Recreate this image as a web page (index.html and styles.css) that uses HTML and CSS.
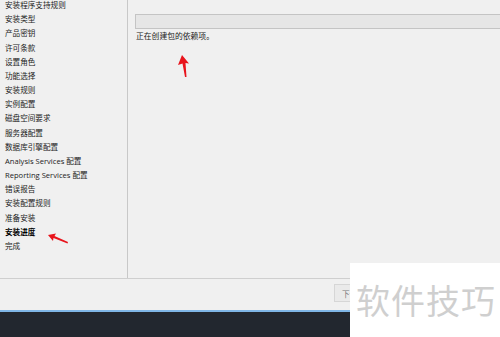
FILE: index.html
```html
<!DOCTYPE html>
<html lang="zh-CN">
<head>
<meta charset="utf-8">
<link rel="stylesheet" href="styles.css">
</head>
<body>
<div class="window">
  <div class="main">
    <nav class="steps">
      <ul class="step-list">
        <li>安装程序支持规则</li>
        <li>安装类型</li>
        <li>产品密钥</li>
        <li>许可条款</li>
        <li>设置角色</li>
        <li>功能选择</li>
        <li>安装规则</li>
        <li>实例配置</li>
        <li>磁盘空间要求</li>
        <li>服务器配置</li>
        <li>数据库引擎配置</li>
        <li>Analysis Services 配置</li>
        <li>Reporting Services 配置</li>
        <li>错误报告</li>
        <li>安装配置规则</li>
        <li>准备安装</li>
        <li class="current">安装进度</li>
        <li>完成</li>
      </ul>
    </nav>
    <section class="content">
      <div class="progress"></div>
      <p class="status">正在创建包的依赖项。</p>
    </section>
  </div>
  <div class="footer">
    <button class="btn">下一</button>
  </div>
  <div class="taskbar"></div>

  <svg class="arrow arrow-up" width="20" height="26" viewBox="0 0 20 26">
    <path d="M6 2 L2 12 L6.5 10.5 L9 24 L10.5 24 L9.5 10 L13 10.5 Z" fill="#e8141c"/>
  </svg>
  <svg class="arrow arrow-left" width="24" height="14" viewBox="0 0 24 14">
    <path d="M1 3 L9 1.5 L7.5 4 L21 10 L20.5 11.5 L6.5 6 L6 9 Z" fill="#e8141c"/>
  </svg>

  <div class="watermark">软件技巧</div>
</div>
</body>
</html>
```
FILE: styles.css
```css
* { box-sizing: border-box; }
html, body { margin: 0; padding: 0; }
body {
  width: 500px;
  height: 337px;
  overflow: hidden;
  background: #f0f0f0;
  font-family: "Open Sans", "Noto Sans CJK SC", sans-serif;
  color: #1e1e1e;
}
.window {
  position: relative;
  width: 500px;
  height: 337px;
  display: flex;
  flex-direction: column;
}
.main {
  display: flex;
  height: 279px;
  border-bottom: 1px solid #cfcfcf;
}
.steps {
  width: 128px;
  border-right: 1px solid #c8c8c8;
  overflow: hidden;
}
.step-list {
  list-style: none;
  margin: -2px 0 0 0;
  padding: 0 0 0 5px;
}
.step-list li {
  font-size: 7.6px;
  line-height: 14.18px;
  height: 14.18px;
  white-space: nowrap;
  color: #222;
}
.step-list li.current {
  font-weight: bold;
  color: #000;
}
.content {
  flex: 1;
  padding: 14px 0 0 7px;
  overflow: hidden;
}
.progress {
  height: 15px;
  margin-right: -10px;
  background: #e6e6e6;
  border: 1px solid #c4c4c4;
}
.status {
  margin: 1px 0 0 1px;
  font-size: 7.8px;
  line-height: 12px;
  color: #222;
}
.footer {
  height: 31px;
  display: flex;
  align-items: flex-start;
  padding: 5px 0 0 334px;
}
.btn {
  height: 18px;
  width: 16px;
  padding: 0 0 0 7px;
  text-align: left;
  white-space: nowrap;
  overflow: hidden;
  background: #eaeaea;
  border: 1px solid #d6d6d6;
  border-right: none;
  font-family: inherit;
  font-size: 7.6px;
  color: #777;
}
.taskbar {
  flex: 1;
  border-top: 2px solid #7fb6e6;
  background: #22272f;
}
.arrow {
  position: absolute;
}
.arrow-up { left: 176px; top: 53px; }
.arrow-left { left: 47px; top: 232px; }
.watermark {
  position: absolute;
  left: 350px;
  top: 263px;
  width: 150px;
  height: 74px;
  background: #ffffff;
  color: #cfcfcf;
  font-family: "Noto Sans CJK SC", sans-serif;
  font-size: 34px;
  line-height: 74px;
  padding-left: 6px;
  letter-spacing: 1px;
  white-space: nowrap;
}
```
